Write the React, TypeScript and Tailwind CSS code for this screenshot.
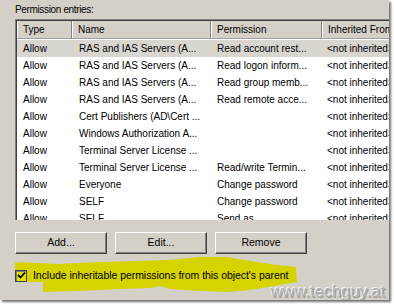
import React from "react";

const rows: [string, string, string, string][] = [
  ["Allow", "RAS and IAS Servers (A...", "Read account rest...", "<not inherited>"],
  ["Allow", "RAS and IAS Servers (A...", "Read logon inform...", "<not inherited>"],
  ["Allow", "RAS and IAS Servers (A...", "Read group memb...", "<not inherited>"],
  ["Allow", "RAS and IAS Servers (A...", "Read remote acce...", "<not inherited>"],
  ["Allow", "Cert Publishers (AD\\Cert ...", "", "<not inherited>"],
  ["Allow", "Windows Authorization A...", "", "<not inherited>"],
  ["Allow", "Terminal Server License ...", "", "<not inherited>"],
  ["Allow", "Terminal Server License ...", "Read/write Termin...", "<not inherited>"],
  ["Allow", "Everyone", "Change password", "<not inherited>"],
  ["Allow", "SELF", "Change password", "<not inherited>"],
  ["Allow", "SELF", "Send as", "<not inherited>"],
];

function Btn({ label }: { label: string }) {
  return (
    <div className="w-[92px] h-[22px] flex items-center justify-center bg-[#d4d0c8] border-t border-l border-t-white border-l-white border-r border-b border-r-[#404040] border-b-[#404040] shadow-[inset_-1px_-1px_0_#808080] text-[10.5px] text-black">
      {label}
    </div>
  );
}

export default function App() {
  return (
    <div className="w-[394px] h-[307px] bg-white overflow-hidden font-['Liberation_Sans',Arial,sans-serif]">
      <div className="relative w-[389px] h-[300px] bg-[#d4d0c8] shadow-[2px_2px_2px_rgba(0,0,0,0.55)] overflow-hidden flex flex-col pl-[15px]">
        <svg className="absolute left-0 top-0 pointer-events-none" width="389" height="300">
          <polygon
            fill="#d6d300"
            points="15,263 20,262 57,264 100,262 167,260 200,257 227,257 244,260 277,265 296,267 297,282 280,285 250,290 227,292 200,291 170,289 160,286 150,288 120,289 80,291 43,292 43,282 15,282"
          />
        </svg>

        <div className="h-[19px] pt-[4px] text-[10px] leading-[12px] tracking-[-0.35px] text-black">Permission entries:</div>

        <div className="h-[201px] border-t border-l border-t-[#808080] border-l-[#808080] bg-white overflow-hidden shadow-[inset_1px_1px_0_#404040] pl-[1px] pt-[1px] text-[10px] text-black">
          <div className="flex h-[18px] bg-[#d4d0c8] border-b border-[#a0a0a0] items-center whitespace-nowrap">
            <div className="w-[55px] shrink-0 h-full flex items-center pl-[6px] border-r border-[#808080] shadow-[inset_1px_0_0_#fff]">Type</div>
            <div className="w-[139px] shrink-0 h-full flex items-center pl-[6px] border-r border-[#808080] shadow-[inset_1px_0_0_#fff]">Name</div>
            <div className="w-[111px] shrink-0 h-full flex items-center pl-[6px] border-r border-[#808080] shadow-[inset_1px_0_0_#fff]">Permission</div>
            <div className="w-[100px] shrink-0 h-full flex items-center pl-[6px] shadow-[inset_1px_0_0_#fff]">Inherited From</div>
          </div>
          <div className="pt-[1px]">
            {rows.map((r, i) => (
              <div key={i} className={`flex h-[17px] items-center whitespace-nowrap ${i === 0 ? "bg-[#d9d6d0]" : ""}`}>
                <div className="w-[55px] shrink-0 pl-[6px]">{r[0]}</div>
                <div className="w-[139px] shrink-0 pl-[7px] overflow-hidden">{r[1]}</div>
                <div className="w-[111px] shrink-0 pl-[6px] overflow-hidden">{r[2]}</div>
                <div className="w-[100px] shrink-0 pl-[5px]">{r[3]}</div>
              </div>
            ))}
          </div>
        </div>

        <div className="flex gap-[8px] mt-[12px]">
          <Btn label="Add..." />
          <Btn label="Edit..." />
          <Btn label="Remove" />
        </div>

        <div className="relative flex items-center mt-[15px] h-[13px]">
          <div className="w-[12px] h-[12px] bg-[#e4e000] border border-[#404040] shadow-[inset_1px_1px_0_#808080] flex items-center justify-center">
            <svg width="9" height="9" viewBox="0 0 9 9">
              <path d="M1 4 L3.5 6.5 L8 1.5" stroke="#000" strokeWidth="1.8" fill="none" />
            </svg>
          </div>
          <span className="ml-[6px] text-[10.5px] tracking-[-0.05px] text-black whitespace-nowrap">
            Include inheritable permissions from this object's parent
          </span>
        </div>

        <div className="absolute right-[4px] bottom-[-1px] text-[16.5px] leading-[20px] text-[#b2b2b2] [text-shadow:-1px_-1px_0_#f4f4f4,1px_1px_0_#9a9a9a]">
          www.techguy.at
        </div>
      </div>
    </div>
  );
}
